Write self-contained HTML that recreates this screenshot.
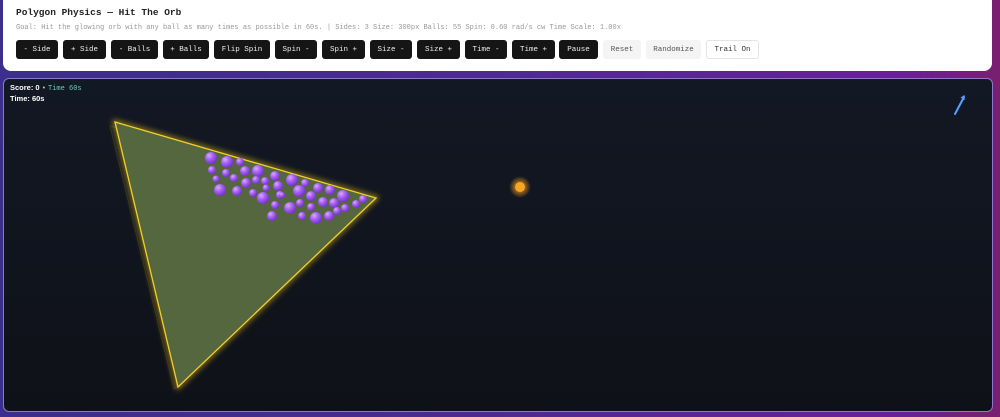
<!DOCTYPE html>
<html><head><meta charset="utf-8"><style>
*{margin:0;padding:0;box-sizing:border-box}
body{width:1000px;height:417px;overflow:hidden;background:linear-gradient(90deg,#3b2e8c 0%,#4d2a92 50%,#6a1f9a 90%,#7a1f70 100%);font-family:"Liberation Mono",monospace;position:relative}
.card{position:absolute;left:3px;top:-8px;width:989px;height:79px;background:#fff;border-radius:8px}
.title{position:absolute;left:13px;font-size:9.5px;font-weight:bold;color:#222}
.goal{position:absolute;left:13px;font-size:7px;color:#999;white-space:nowrap}
.btn{position:absolute;top:40px;height:19px;border-radius:3px;background:#151515;color:#eee;font-size:7.5px;display:flex;align-items:center;justify-content:center;white-space:pre}
.lt{background:#f4f4f4;color:#555}
.ol{background:#fff;color:#333;border:1px solid #e4e4e4}
.panel{position:absolute;left:3px;top:78px;width:990px;height:334px;background:linear-gradient(180deg,#121824,#0f1118);border:1px solid #8a78c8;border-radius:6px;overflow:hidden}
.hud{position:absolute;left:6px;top:4px;font-family:"Liberation Sans",sans-serif;font-size:7.5px;font-weight:bold;color:#fff;line-height:10px}
.hud span{font-family:"Liberation Mono",monospace;font-weight:normal;color:#6ec9c0;font-size:7px}
</style></head><body>
<div class="card">
<div class="title" style="top:15px">Polygon Physics — Hit The Orb</div>
<div class="goal" style="top:32px">Goal: Hit the glowing orb with any ball as many times as possible in 60s. | Sides: 3 Size: 300px Balls: 55 Spin: 0.60 rad/s cw Time Scale: 1.00x</div>
</div>
<div class="btn" style="left:16px;width:42px">- Side</div>
<div class="btn" style="left:63px;width:43px">+ Side</div>
<div class="btn" style="left:111px;width:47px">- Balls</div>
<div class="btn" style="left:163px;width:46px">+ Balls</div>
<div class="btn" style="left:214px;width:56px">Flip Spin</div>
<div class="btn" style="left:275px;width:42px">Spin -</div>
<div class="btn" style="left:322px;width:43px">Spin +</div>
<div class="btn" style="left:370px;width:42px">Size -</div>
<div class="btn" style="left:417px;width:43px">Size +</div>
<div class="btn" style="left:465px;width:42px">Time -</div>
<div class="btn" style="left:512px;width:43px">Time +</div>
<div class="btn" style="left:559px;width:39px">Pause</div>
<div class="btn lt" style="left:603px;width:38px">Reset</div>
<div class="btn lt" style="left:646px;width:55px">Randomize</div>
<div class="btn ol" style="left:706px;width:53px">Trail On</div>
<div class="panel">
<svg width="1000" height="417" style="position:absolute;left:-4px;top:-79px">
<defs>
<filter id="g2" x="-20%" y="-20%" width="140%" height="140%"><feGaussianBlur stdDeviation="3"/></filter>
<radialGradient id="bb" cx="35%" cy="30%" r="70%"><stop offset="0" stop-color="#d7a8ff"/><stop offset=".5" stop-color="#a25ef0"/><stop offset="1" stop-color="#7a32d0"/></radialGradient>
<radialGradient id="oo"><stop offset="0" stop-color="#ffb23a"/><stop offset=".45" stop-color="#f29a1a"/><stop offset="1" stop-color="#f29a1a" stop-opacity="0"/></radialGradient>
</defs>
<polygon points="110,126 372,200 174,389" fill="none" stroke="#c9a820" stroke-width="1" opacity=".15"/>
<polygon points="115,122 376,198 178,387" fill="none" stroke="#ffd21a" stroke-width="4" filter="url(#g2)" opacity=".6"/>
<polygon points="115,122 376,198 178,387" fill="#55673f" stroke="#f3cf2a" stroke-width="1.3"/>
<g fill="url(#bb)">
<circle cx="211" cy="158" r="6"/><circle cx="227" cy="162" r="6"/><circle cx="240" cy="162" r="4"/><circle cx="212" cy="170" r="4"/><circle cx="226" cy="173" r="4"/><circle cx="245" cy="171" r="5"/><circle cx="258" cy="171" r="6"/><circle cx="216" cy="179" r="3.5"/><circle cx="234" cy="178" r="4"/><circle cx="275" cy="176" r="5"/><circle cx="292" cy="180" r="6"/><circle cx="220" cy="190" r="6"/><circle cx="237" cy="191" r="5"/><circle cx="246" cy="183" r="5"/><circle cx="256" cy="180" r="4"/><circle cx="265" cy="181" r="4"/><circle cx="278" cy="186" r="5"/><circle cx="253" cy="193" r="4"/><circle cx="263" cy="198" r="6"/><circle cx="280" cy="195" r="4"/><circle cx="299" cy="191" r="6"/><circle cx="305" cy="183" r="4"/><circle cx="318" cy="188" r="5"/><circle cx="311" cy="196" r="5"/><circle cx="330" cy="190" r="5"/><circle cx="343" cy="196" r="6"/><circle cx="275" cy="205" r="4"/><circle cx="290" cy="208" r="6"/><circle cx="300" cy="203" r="4"/><circle cx="311" cy="207" r="4"/><circle cx="323" cy="202" r="5"/><circle cx="334" cy="203" r="5"/><circle cx="345" cy="208" r="4"/><circle cx="356" cy="204" r="4"/><circle cx="363" cy="199" r="4"/><circle cx="272" cy="216" r="5"/><circle cx="302" cy="216" r="4"/><circle cx="316" cy="218" r="6"/><circle cx="329" cy="216" r="5"/><circle cx="337" cy="211" r="4"/><circle cx="282" cy="195" r="3"/><circle cx="266" cy="188" r="3.5"/>
</g>
<circle cx="520" cy="187" r="11" fill="url(#oo)" opacity=".6"/>
<circle cx="520" cy="187" r="5" fill="#f6a623"/>
<line x1="955" y1="114" x2="964" y2="97" stroke="#5aa0ff" stroke-width="2" stroke-linecap="round"/>
<path d="M961 98 L964 96 L964 100" fill="none" stroke="#5aa0ff" stroke-width="1.2"/>
</svg>
<div class="hud">Score: 0 <span style="color:#ccc">•</span> <span>Time 60s</span><br>Time: 60s</div>
</div>
</body></html>
